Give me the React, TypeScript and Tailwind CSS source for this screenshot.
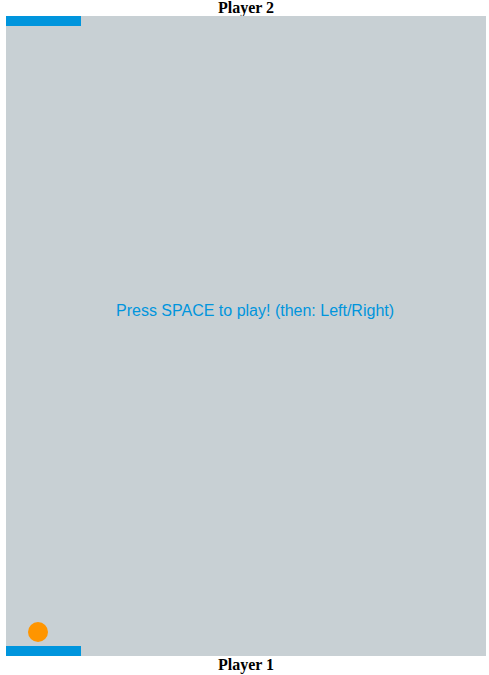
import React from 'react';

const serif = { fontFamily: '"Liberation Serif", "Times New Roman", serif' };

export default function App() {
  return (
    <div className="w-[489px] h-[675px] bg-white">
      <div className="w-[480px] ml-[6px] h-[16px] leading-[16px] text-center text-[16px] font-bold text-black" style={serif}>
        Player 2
      </div>
      <div className="relative w-[480px] h-[640px] ml-[6px] bg-[#c8d0d4]">
        <div className="absolute left-0 top-0 w-[75px] h-[10px] bg-[#0095dd]" />
        <div className="absolute left-[110px] top-[285px] text-[16px] leading-[20px] text-[#0095dd] whitespace-nowrap font-['Liberation_Sans',Arial,sans-serif]">
          Press SPACE to play! (then: Left/Right)
        </div>
        <div className="absolute left-[22px] top-[606px] w-[20px] h-[20px] rounded-full bg-[#ff9500]" />
        <div className="absolute left-0 bottom-0 w-[75px] h-[10px] bg-[#0095dd]" />
      </div>
      <div className="w-[480px] ml-[6px] h-[17px] pt-[1px] leading-[16px] text-center text-[16px] font-bold text-black" style={serif}>
        Player 1
      </div>
    </div>
  );
}
